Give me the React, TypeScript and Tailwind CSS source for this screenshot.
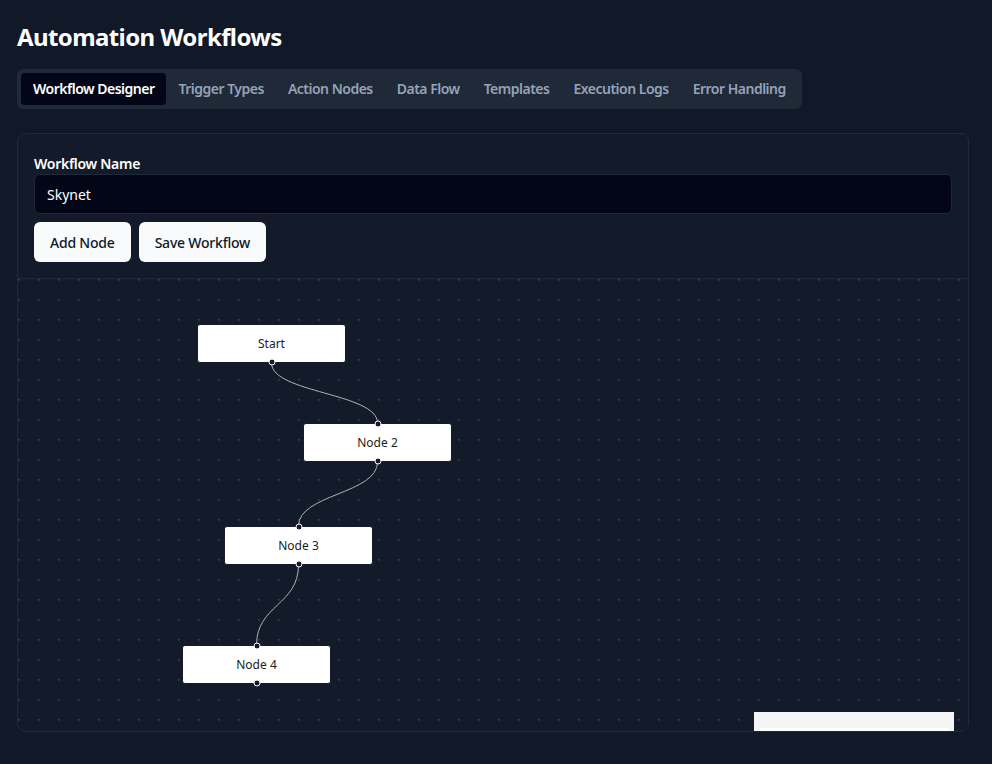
import React from "react";

const tabs = [
  "Workflow Designer",
  "Trigger Types",
  "Action Nodes",
  "Data Flow",
  "Templates",
  "Execution Logs",
  "Error Handling",
];

type N = { id: string; label: string; x: number; y: number; input: boolean };
const nodes: N[] = [
  { id: "1", label: "Start", x: 179, y: 45, input: false },
  { id: "2", label: "Node 2", x: 285, y: 144, input: true },
  { id: "3", label: "Node 3", x: 206, y: 247, input: true },
  { id: "4", label: "Node 4", x: 164, y: 366, input: true },
];
const W = 149;
const H = 39;

function edgePath(a: N, b: N) {
  const sx = a.x + W / 2;
  const sy = a.y + H;
  const tx = b.x + W / 2;
  const ty = b.y;
  const off = 0.5 * Math.abs(ty - sy);
  return `M${sx},${sy} C${sx},${sy + off} ${tx},${ty - off} ${tx},${ty}`;
}

export default function App() {
  return (
    <div className="min-h-screen bg-[#111827] pl-[17px] pr-[23px] pt-[21px] pb-8 text-white font-['Noto_Sans',sans-serif]">
      <h1 className="text-2xl font-bold leading-8 mb-[16px] tracking-[-0.025em]">Automation Workflows</h1>
      <div className="inline-flex items-center rounded-md bg-[#1f2937] p-1">
        {tabs.map((t, i) => (
          <div
            key={t}
            className={
              i === 0
                ? "rounded-[4px] bg-[#020617] px-3 py-1.5 text-sm font-semibold leading-5 tracking-[-0.036em] text-white"
                : "px-3 py-1.5 text-sm font-semibold leading-5 tracking-[-0.036em] text-[#94a3b8]"
            }
          >
            {t}
          </div>
        ))}
      </div>
      <div className="mt-6 overflow-hidden rounded-lg border border-[#1f2937] bg-[#131a29]">
        <div className="px-4 pt-5 pb-4">
          <div className="text-sm font-semibold leading-5 tracking-[-0.02em] text-white">Workflow Name</div>
          <div className="flex h-10 items-center rounded-md border border-[#1f2937] bg-[#020617] px-3 pt-0.5 text-sm text-white">
            Skynet
          </div>
          <div className="mt-2 flex gap-2">
            <button className="h-10 rounded-md bg-[#f8fafc] px-4 pt-0.5 text-sm font-medium tracking-[-0.015em] text-[#0f172a]">
              Add Node
            </button>
            <button className="h-10 rounded-md bg-[#f8fafc] px-4 pt-0.5 text-sm font-medium tracking-[-0.015em] text-[#0f172a]">
              Save Workflow
            </button>
          </div>
        </div>
        <div className="relative h-[453px] overflow-hidden border-t border-[#1f2937]">
          <svg className="absolute inset-0 h-full w-full">
            <defs>
              <pattern id="dots" x="0" y="0" width="20" height="20" patternUnits="userSpaceOnUse">
                <rect x="0" y="0" width="1.6" height="1.6" fill="#3b4352" />
              </pattern>
            </defs>
            <rect width="100%" height="100%" fill="url(#dots)" />
            {nodes.slice(1).map((n, i) => (
              <path
                key={n.id}
                d={edgePath(nodes[i], n)}
                fill="none"
                stroke="#b1b1b7"
                strokeWidth={1}
              />
            ))}
          </svg>
          {nodes.map((n) => (
            <div
              key={n.id}
              className="absolute flex items-center justify-center rounded-[3px] border border-[#1a192b] bg-white text-xs text-[#222222]"
              style={{ left: n.x, top: n.y, width: W, height: H }}
            >
              {n.label}
              {n.input && (
                <span className="absolute left-1/2 top-0 h-[7px] w-[7px] -translate-x-1/2 -translate-y-1/2 rounded-full border border-white bg-[#1a192b]" />
              )}
              <span className="absolute bottom-0 left-1/2 h-[7px] w-[7px] -translate-x-1/2 translate-y-1/2 rounded-full border border-white bg-[#1a192b]" />
            </div>
          ))}
          <div className="absolute right-[14px] top-[433px] h-[150px] w-[200px] bg-[#f5f5f5] px-[6px] pt-[16px]">
            <div className="h-full w-full bg-white" />
          </div>
        </div>
      </div>
    </div>
  );
}
